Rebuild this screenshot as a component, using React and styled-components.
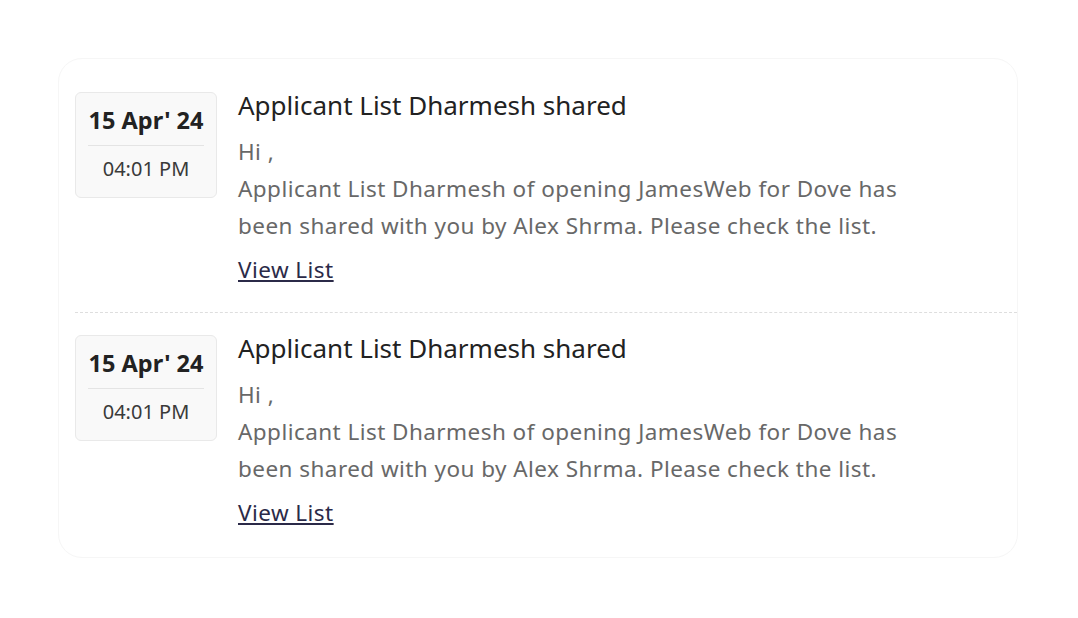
import React from 'react';
import styled, { createGlobalStyle } from 'styled-components';

const GlobalStyle = createGlobalStyle`
  body {
    margin: 0;
    background: #ffffff;
    font-family: 'Noto Sans', 'Open Sans', Arial, sans-serif;
  }
`;

const Page = styled.div`
  padding: 58px 60px 58px 58px;
`;

const Card = styled.div`
  border: 1px solid #f6f6f6;
  border-radius: 24px;
  padding: 33px 0 26px 16px;
`;

const Item = styled.div`
  display: flex;
  align-items: flex-start;
  gap: 21px;
  padding: ${props => (props.first ? '0' : '22px')} 0
    ${props => (props.last ? '0' : '24px')} 0;
  border-bottom: ${props => (props.last ? 'none' : '1px dashed #dedede')};
`;

const DateBox = styled.div`
  flex-shrink: 0;
  width: 142px;
  box-sizing: border-box;
  padding: 12px 12px 16px;
  background: #f9f9f9;
  border: 1px solid #e9e9e9;
  border-radius: 6px;
  text-align: center;
`;

const DateText = styled.div`
  display: flex;
  justify-content: center;
  white-space: nowrap;
  font-size: 23.5px;
  font-weight: 700;
  color: #222222;
  line-height: 30px;
  padding-bottom: 10px;
  border-bottom: 1px solid #e4e4e4;
`;

const TimeText = styled.div`
  font-size: 20px;
  color: #3a3a3a;
  line-height: 24px;
  padding-top: 11px;
`;

const Content = styled.div`
  max-width: 685px;
`;

const Title = styled.div`
  font-size: 26px;
  color: #222222;
  line-height: 26px;
  margin-bottom: 15px;
`;

const Body = styled.div`
  font-size: 22.5px;
  letter-spacing: 0.45px;
  color: #686868;
  line-height: 37px;
`;

const Link = styled.a`
  display: inline-block;
  margin-top: 7px;
  font-size: 22.5px;
  letter-spacing: 0.45px;
  line-height: 37px;
  color: #2b2a48;
  text-decoration: underline;
  cursor: pointer;
`;

const notifications = [
  {
    id: 1,
    date: "15 Apr' 24",
    time: '04:01 PM',
    title: 'Applicant List Dharmesh shared',
    message:
      'Applicant List Dharmesh of opening JamesWeb for Dove has been shared with you by Alex Shrma. Please check the list.',
  },
  {
    id: 2,
    date: "15 Apr' 24",
    time: '04:01 PM',
    title: 'Applicant List Dharmesh shared',
    message:
      'Applicant List Dharmesh of opening JamesWeb for Dove has been shared with you by Alex Shrma. Please check the list.',
  },
];

export default function App() {
  return (
    <>
      <GlobalStyle />
      <Page>
        <Card>
          {notifications.map((n, index) => (
            <Item
              key={n.id}
              first={index === 0}
              last={index === notifications.length - 1}
            >
              <DateBox>
                <DateText>{n.date}</DateText>
                <TimeText>{n.time}</TimeText>
              </DateBox>
              <Content>
                <Title>{n.title}</Title>
                <Body>
                  Hi ,
                  <br />
                  {n.message}
                </Body>
                <Link>View List</Link>
              </Content>
            </Item>
          ))}
        </Card>
      </Page>
    </>
  );
}
